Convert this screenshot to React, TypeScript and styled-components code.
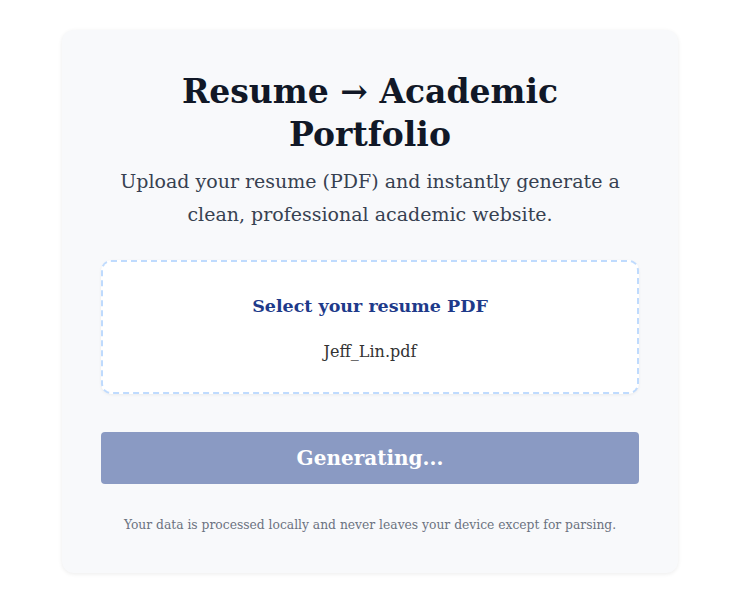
import React from "react";
import styled, { createGlobalStyle } from "styled-components";

const Global = createGlobalStyle`
  html, body { margin: 0; padding: 0; background: #ffffff; }
  body { font-family: "DejaVu Serif", Georgia, serif; }
`;

const Page = styled.div`
  display: flex;
  justify-content: center;
  padding: 30px 10px 40px 0;
`;

const Card = styled.div`
  width: 616px;
  box-sizing: border-box;
  background: #f8f9fb;
  border-radius: 12px;
  box-shadow: 0 1px 4px rgba(0, 0, 0, 0.08);
  padding: 40px 39px 41px;
  display: flex;
  flex-direction: column;
  align-items: stretch;
  text-align: center;
`;

const Title = styled.h1`
  margin: 0 auto;
  max-width: 420px;
  font-size: 33px;
  line-height: 43px;
  font-weight: 700;
  color: #111827;
`;

const Subtitle = styled.p`
  margin: 9px auto 0;
  max-width: 510px;
  font-size: 19px;
  line-height: 33px;
  color: #374151;
`;

const Drop = styled.div`
  margin-top: 29px;
  height: 134px;
  box-sizing: border-box;
  padding-top: 3px;
  background: #ffffff;
  border: 2px dashed #bfdbfe;
  border-radius: 10px;
  box-shadow: 0 1px 3px rgba(0, 0, 0, 0.06);
  display: flex;
  flex-direction: column;
  align-items: center;
  justify-content: center;
  gap: 26px;
`;

const DropLabel = styled.div`
  font-size: 17.5px;
  font-weight: 700;
  color: #1e3a8a;
`;

const FileName = styled.div`
  font-size: 16px;
  color: #333333;
`;

const Button = styled.button`
  margin-top: 38px;
  height: 52px;
  border: none;
  border-radius: 4px;
  background: #8a9ac3;
  color: #ffffff;
  font-family: inherit;
  font-size: 20px;
  font-weight: 700;
  cursor: default;
`;

const Note = styled.p`
  margin: 34px 0 0;
  font-size: 12.3px;
  color: #6b7280;
`;

export default function App() {
  return (
    <>
      <Global />
      <Page>
        <Card>
          <Title>Resume → Academic Portfolio</Title>
          <Subtitle>
            Upload your resume (PDF) and instantly generate a clean, professional academic website.
          </Subtitle>
          <Drop>
            <DropLabel>Select your resume PDF</DropLabel>
            <FileName>Jeff_Lin.pdf</FileName>
          </Drop>
          <Button disabled>Generating...</Button>
          <Note>Your data is processed locally and never leaves your device except for parsing.</Note>
        </Card>
      </Page>
    </>
  );
}
